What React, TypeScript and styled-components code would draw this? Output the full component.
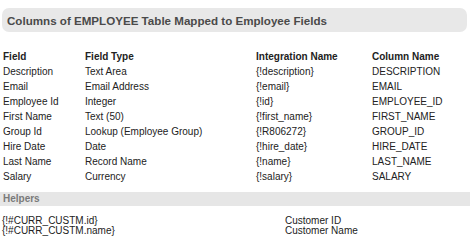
import React from 'react'
import styled, { createGlobalStyle } from 'styled-components'

const GlobalStyle = createGlobalStyle`
  html, body {
    margin: 0;
    padding: 0;
    background: #ffffff;
  }
  body {
    font-family: 'Liberation Sans', Arial, sans-serif;
    font-size: 10px;
    color: #222222;
  }
`

const Page = styled.div`
  width: 470px;
  padding-top: 8px;
`

const TitleBar = styled.div`
  margin: 0 3px 0 2px;
  height: 24px;
  line-height: 25px;
  padding-left: 5px;
  border-radius: 7px;
  background: #e8e8e8;
  color: #4a4a4a;
  font-size: 11.6px;
  font-weight: bold;
`

const FieldGrid = styled.div`
  display: grid;
  grid-template-columns: 82px 171px 116px 1fr;
  grid-template-rows: 16px;
  grid-auto-rows: 15px;
  margin-top: 16px;
  padding-left: 3px;
`

const Cell = styled.div<{ $head?: boolean }>`
  display: flex;
  align-items: center;
  white-space: nowrap;
  font-weight: ${(props) => (props.$head ? 'bold' : 'normal')};
`

const SectionBar = styled.div`
  margin-top: 8px;
  height: 14px;
  line-height: 14px;
  padding-left: 3px;
  background: #e6e6e6;
  color: #7a7a7a;
  font-weight: bold;
`

const HelperGrid = styled.div`
  display: grid;
  grid-template-columns: 283px 1fr;
  grid-auto-rows: 10px;
  margin-top: 10px;
  padding-left: 2px;
`

const HelperCell = styled.div`
  line-height: 10px;
  white-space: nowrap;
`

const headers = ['Field', 'Field Type', 'Integration Name', 'Column Name']

const fields = [
  ['Description', 'Text Area', '{!description}', 'DESCRIPTION'],
  ['Email', 'Email Address', '{!email}', 'EMAIL'],
  ['Employee Id', 'Integer', '{!id}', 'EMPLOYEE_ID'],
  ['First Name', 'Text (50)', '{!first_name}', 'FIRST_NAME'],
  ['Group Id', 'Lookup (Employee Group)', '{!R806272}', 'GROUP_ID'],
  ['Hire Date', 'Date', '{!hire_date}', 'HIRE_DATE'],
  ['Last Name', 'Record Name', '{!name}', 'LAST_NAME'],
  ['Salary', 'Currency', '{!salary}', 'SALARY']
]

const helpers = [
  ['{!#CURR_CUSTM.id}', 'Customer ID'],
  ['{!#CURR_CUSTM.name}', 'Customer Name']
]

const App: React.FC = () => {
  return (
    <>
      <GlobalStyle />
      <Page>
        <TitleBar>Columns of EMPLOYEE Table Mapped to Employee Fields</TitleBar>
        <FieldGrid>
          {headers.map((h) => (
            <Cell key={h} $head>
              {h}
            </Cell>
          ))}
          {fields.map((row) =>
            row.map((value, i) => <Cell key={row[0] + i}>{value}</Cell>)
          )}
        </FieldGrid>
        <SectionBar>Helpers</SectionBar>
        <HelperGrid>
          {helpers.map((row) =>
            row.map((value, i) => (
              <HelperCell key={row[0] + i}>{value}</HelperCell>
            ))
          )}
        </HelperGrid>
      </Page>
    </>
  )
}

export default App
